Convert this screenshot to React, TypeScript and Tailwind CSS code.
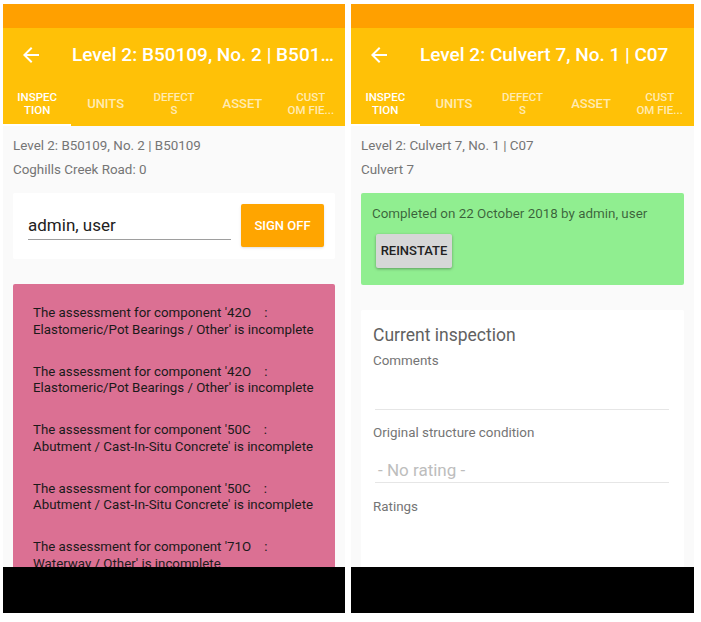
import React from "react";

const font = { fontFamily: "Roboto, 'Noto Sans', sans-serif" };

function BackArrow() {
  return (
    <svg width="24" height="24" viewBox="0 0 24 24" className="shrink-0">
      <path
        fill="#ffffff"
        d="M20 11H7.83l5.59-5.59L12 4l-8 8 8 8 1.41-1.41L7.83 13H20v-2z"
      />
    </svg>
  );
}

function Tabs() {
  return (
    <div className="flex h-[44px] bg-[#FFC107]">
      <div className="flex flex-1 flex-col items-center justify-center border-b-2 border-white pt-[2px] text-center text-[11.5px] font-medium leading-[13px] text-white">
        <span>INSPEC</span>
        <span>TION</span>
      </div>
      <div className="flex flex-1 items-center justify-center pb-[1px] text-[13px] font-medium text-white/70">
        UNITS
      </div>
      <div className="flex flex-1 flex-col items-center justify-center pb-[1px] text-center text-[11.5px] font-medium leading-[13px] text-white/70">
        <span>DEFECT</span>
        <span>S</span>
      </div>
      <div className="flex flex-1 items-center justify-center pb-[1px] text-[13px] font-medium text-white/70">
        ASSET
      </div>
      <div className="flex flex-1 flex-col items-center justify-center pb-[1px] text-center text-[11.5px] font-medium leading-[13px] text-white/70">
        <span>CUST</span>
        <span>OM FIE...</span>
      </div>
    </div>
  );
}

function Header({ title }: { title: string }) {
  return (
    <>
      <div className="h-[24px] bg-[#FFA000]" />
      <div className="flex h-[54px] items-center bg-[#FFC107] pl-[16px] pr-[4px]">
        <BackArrow />
        <div className="ml-[29px] min-w-0 flex-1 truncate text-[19px] font-medium text-white">
          {title}
        </div>
      </div>
      <Tabs />
    </>
  );
}

// each warning shown on two lines, as the app wraps them
const warnings: [string, string][] = [
  ["The assessment for component '42O    :", "Elastomeric/Pot Bearings / Other' is incomplete"],
  ["The assessment for component '42O    :", "Elastomeric/Pot Bearings / Other' is incomplete"],
  ["The assessment for component '50C    :", "Abutment / Cast-In-Situ Concrete' is incomplete"],
  ["The assessment for component '50C    :", "Abutment / Cast-In-Situ Concrete' is incomplete"],
  ["The assessment for component '71O    :", "Waterway / Other' is incomplete"],
];

function LeftScreen() {
  return (
    <div className="flex h-[609px] w-[342px] flex-col overflow-hidden">
      <Header title="Level 2: B50109, No. 2 | B50109" />
      <div className="flex-1 overflow-hidden bg-[#fafafa] px-[10px] pt-[8px]">
        <p className="text-[13.4px] leading-6 text-[#757575]">Level 2: B50109, No. 2 | B50109</p>
        <p className="text-[13.4px] leading-6 text-[#757575]">Coghills Creek Road: 0</p>

        <div className="mt-[11px] flex h-[66px] items-start rounded-[2px] bg-white pl-[15px] pr-[11px] pt-[11px]">
          <div className="h-[36px] w-[203px] border-b border-[#9e9e9e] pt-[9px]">
            <div className="text-[17px] leading-[24px] text-[#212121]">admin, user</div>
          </div>
          <button className="ml-[10px] h-[43px] w-[83px] rounded-[2px] bg-[#FFA500] text-[13px] font-medium text-white shadow-sm">
            SIGN OFF
          </button>
        </div>

        <div className="mt-[25px] flex h-[400px] flex-col gap-[25.5px] rounded-[2px] bg-[#DB7093] pl-[20px] pt-[21px]">
          {warnings.map((w, i) => (
            <p key={i} className="whitespace-pre text-[13.3px] leading-[16.5px] text-[#1a1a1a]">
              {w[0]}
              <br />
              {w[1]}
            </p>
          ))}
        </div>
      </div>
      <div className="h-[46px] shrink-0 bg-black" />
    </div>
  );
}

function RightScreen() {
  return (
    <div className="flex h-[609px] w-[343px] flex-col overflow-hidden">
      <Header title="Level 2: Culvert 7, No. 1 | C07" />
      <div className="flex-1 overflow-hidden bg-[#fafafa] px-[10px] pt-[8px]">
        <p className="text-[13.4px] leading-6 text-[#757575]">Level 2: Culvert 7, No. 1 | C07</p>
        <p className="text-[13.4px] leading-6 text-[#757575]">Culvert 7</p>

        <div className="mt-[11px] h-[92px] rounded-[2px] bg-[#90EE90] pl-[11px] pt-[11px]">
          <p className="text-[13.4px] leading-[20px] text-black/60">
            Completed on 22 October 2018 by admin, user
          </p>
          <button className="ml-[4px] mt-[10px] h-[34px] w-[76px] rounded-[2px] bg-[#d6d7d7] text-[13px] font-medium text-[#212121] shadow-[0_1px_3px_rgba(0,0,0,0.35)]">
            REINSTATE
          </button>
        </div>

        <div className="mt-[25px] h-[300px] rounded-[2px] bg-white px-[12px] pt-[13px]">
          <h3 className="text-[17.5px] leading-[24px] text-[#616161]">Current inspection</h3>
          <p className="mt-[4px] text-[13.4px] leading-[20px] text-[#757575]">Comments</p>
          <div className="ml-[2px] mr-[3px] h-[39px] border-b border-[#e6e6e6]" />
          <p className="mt-[13px] text-[13.4px] leading-[20px] text-[#757575]">Original structure condition</p>
          <div className="ml-[2px] mr-[3px] h-[40px] border-b border-[#e6e6e6] pl-[3px] pt-[15px]">
            <div className="text-[17px] leading-[24px] text-[#bdbdbd]">- No rating -</div>
          </div>
          <p className="mt-[14px] text-[13.4px] leading-[20px] text-[#757575]">Ratings</p>
        </div>
      </div>
      <div className="h-[46px] shrink-0 bg-black" />
    </div>
  );
}

export default function App() {
  return (
    <div className="flex h-[622px] w-[701px] gap-[6px] bg-white pl-[3px] pt-[4px]" style={font}>
      <LeftScreen />
      <RightScreen />
    </div>
  );
}
